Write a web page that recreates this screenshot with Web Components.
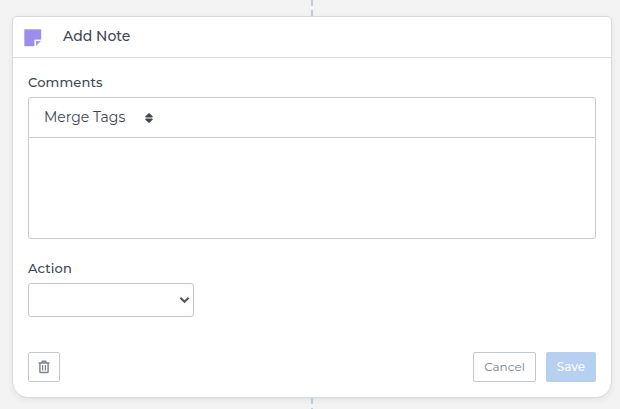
<!DOCTYPE html>
<html lang="en">
<head>
<meta charset="UTF-8">
<title>Add Note</title>
<style>
	body {
		margin: 0;
		height: 409px;
		overflow: hidden;
		background: #f3f3f3;
		color: #3f4650;
		font-family: Montserrat, Inter, sans-serif;
	}
</style>
</head>
<body>
<flow-canvas>
	<step-card>
		<note-icon slot="icon"></note-icon>
		<span slot="title">Add Note</span>
		<form-field label="Comments">
			<comment-editor></comment-editor>
		</form-field>
		<form-field label="Action" class="action">
			<action-select></action-select>
		</form-field>
		<card-actions slot="footer"></card-actions>
	</step-card>
</flow-canvas>

<script>
class FlowCanvas extends HTMLElement {
	constructor() {
		super();
		this.attachShadow({ mode: "open" });
		this.shadowRoot.innerHTML = `
			<style>
				:host {
					display: grid;
					grid-template-rows: 16px 382px 11px;
					padding: 0 8px 0 12px;
				}
				.line {
					width: 2px;
					margin-left: 299px;
					background: repeating-linear-gradient(#c3ccd6 0 6px, transparent 6px 10px);
				}
			</style>
			<div class="line"></div>
			<slot></slot>
			<div class="line"></div>
		`;
	}
}

class StepCard extends HTMLElement {
	constructor() {
		super();
		this.attachShadow({ mode: "open" });
		this.shadowRoot.innerHTML = `
			<style>
				:host {
					display: flex;
					flex-direction: column;
					box-sizing: border-box;
					border: 1px solid #d6dbe0;
					border-radius: 5px 5px 16px 16px;
					background: #fff;
					box-shadow: 0 2px 6px rgba(0, 0, 0, 0.07);
				}
				header {
					display: flex;
					align-items: center;
					box-sizing: border-box;
					height: 41px;
					padding-left: 10px;
					border-bottom: 1px solid #d6dbe0;
				}
				.title {
					margin: -2px 0 0 21px;
					font-size: 14px;
					font-weight: 500;
					line-height: 20px;
				}
				main {
					flex: 1;
					padding: 14px 15px 0;
				}
				footer {
					padding: 0 15px 15px;
				}
			</style>
			<header>
				<slot name="icon"></slot>
				<div class="title"><slot name="title"></slot></div>
			</header>
			<main><slot></slot></main>
			<footer><slot name="footer"></slot></footer>
		`;
	}
}

class NoteIcon extends HTMLElement {
	constructor() {
		super();
		this.attachShadow({ mode: "open" });
		this.shadowRoot.innerHTML = `
			<style>
				:host { display: block; width: 19px; height: 19px; }
				svg { display: block; }
			</style>
			<svg width="19" height="19" viewBox="0 0 19 19">
				<path fill="#ddd6fa" d="M1 1h17.5v11.5L12.5 18.5H1z"/>
				<path fill="#9b8cee" d="M1.5 1.5H18v10.2h-6.3V18H1.5z"/>
				<path fill="#fff" d="M11.5 18.5v-6.8h7v1l-5.8 5.8z"/>
				<path fill="#a899f0" d="M13 13h5l-5 5z"/>
			</svg>
		`;
	}
}

class FormField extends HTMLElement {
	constructor() {
		super();
		this.attachShadow({ mode: "open" });
		this.shadowRoot.innerHTML = `
			<style>
				:host { display: block; }
				:host(.action) { margin-top: 19px; }
				label {
					display: block;
					height: 25px;
					font-size: 13px;
					font-weight: 500;
					line-height: 20px;
					letter-spacing: 0.15px;
				}
			</style>
			<label>${this.getAttribute("label")}</label>
			<slot></slot>
		`;
	}
}

class CommentEditor extends HTMLElement {
	constructor() {
		super();
		this.attachShadow({ mode: "open" });
		this.shadowRoot.innerHTML = `
			<style>
				:host {
					display: block;
					box-sizing: border-box;
					height: 142px;
					border: 1px solid #ccc;
					border-radius: 3px;
				}
				.toolbar {
					display: flex;
					align-items: center;
					height: 39px;
					padding-left: 15px;
					border-bottom: 1px solid #ccc;
				}
				.tags {
					width: 101px;
					padding-bottom: 2px;
					font-size: 14px;
					font-weight: 400;
					white-space: nowrap;
				}
			</style>
			<div class="toolbar">
				<span class="tags">Merge Tags</span>
				<svg width="8" height="10" viewBox="0 0 8 10">
					<path fill="#3f4650" d="M4 0 7.7 3.3Q7.9 4.3 7 4.4H1Q.1 4.3.3 3.3zM4 10 7.7 6.7Q7.9 5.7 7 5.6H1Q.1 5.7.3 6.7z"/>
				</svg>
			</div>
		`;
	}
}

class ActionSelect extends HTMLElement {
	constructor() {
		super();
		this.attachShadow({ mode: "open" });
		this.shadowRoot.innerHTML = `
			<style>
				:host {
					display: flex;
					align-items: center;
					justify-content: flex-end;
					box-sizing: border-box;
					width: 166px;
					height: 34px;
					padding-right: 3px;
					border: 1px solid #c6c6c6;
					border-radius: 3px;
				}
			</style>
			<svg width="11" height="8" viewBox="0 0 11 8">
				<path fill="none" stroke="#555" stroke-width="2.1" d="M1.4 1.8 5.5 5.7 9.6 1.8"/>
			</svg>
		`;
	}
}

class CardActions extends HTMLElement {
	constructor() {
		super();
		this.attachShadow({ mode: "open" });
		this.shadowRoot.innerHTML = `
			<style>
				:host {
					display: flex;
					gap: 10px;
				}
				button {
					box-sizing: border-box;
					height: 30px;
					padding: 0 0 1px;
					border: 1px solid #c3c8d3;
					border-radius: 2px;
					background: #fff;
					color: #7b808a;
					font: 400 12px Montserrat, Inter, sans-serif;
				}
				.delete {
					display: flex;
					align-items: center;
					justify-content: center;
					width: 32px;
					margin-right: auto;
				}
				.cancel {
					width: 63px;
				}
				.save {
					width: 50px;
					border-color: #b7cff1;
					background: #b7cff1;
					color: #fafcff;
					font-weight: 500;
				}
			</style>
			<button class="delete" aria-label="Delete">
				<svg width="12" height="14" viewBox="0 0 12 14">
					<path fill="none" stroke="#80858f" stroke-width="1.5" d="M.6 3.1h10.8M3.6 2.8 4.4 1.3h3.2l.8 1.5M1.9 3.3v8.1q0 1.2 1.2 1.2h5.8q1.2 0 1.2-1.2V3.3"/>
					<path stroke="#80858f" stroke-width="1.3" d="M4.6 5v5.6M7.4 5v5.6"/>
				</svg>
			</button>
			<button class="cancel">Cancel</button>
			<button class="save">Save</button>
		`;
	}
}

customElements.define("flow-canvas", FlowCanvas);
customElements.define("step-card", StepCard);
customElements.define("note-icon", NoteIcon);
customElements.define("form-field", FormField);
customElements.define("comment-editor", CommentEditor);
customElements.define("action-select", ActionSelect);
customElements.define("card-actions", CardActions);
</script>
</body>
</html>
